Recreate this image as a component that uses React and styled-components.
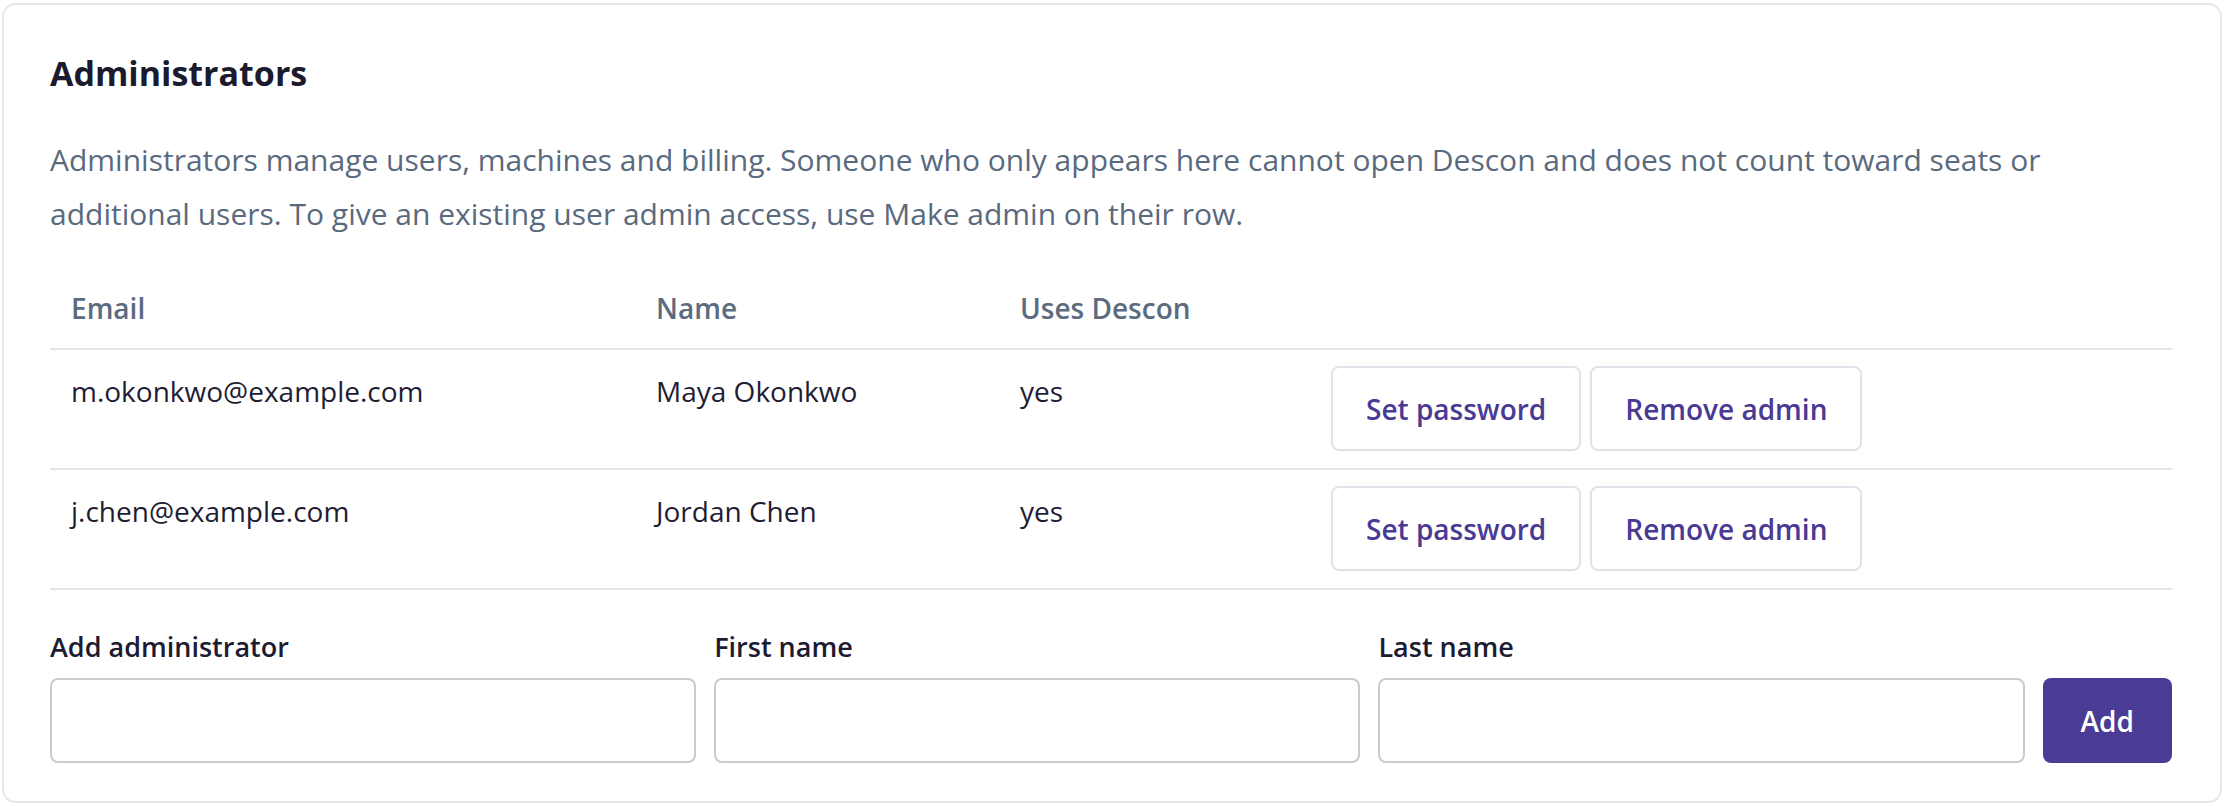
import React from "react";
import styled, { createGlobalStyle } from "styled-components";

const GlobalStyle = createGlobalStyle`
  html, body {
    margin: 0;
    padding: 0;
    background: #ffffff;
  }
  body {
    font-family: "Segoe UI", "Open Sans", "Noto Sans", sans-serif;
    color: #1d1b31;
  }
  * {
    box-sizing: border-box;
  }
`;

const Card = styled.section`
  margin: 3px 2px 2px 2px;
  padding: 47px 48px 38px 46px;
  background: #ffffff;
  border: 2px solid #e3e8ef;
  border-radius: 14px;
`;

const Title = styled.h2`
  margin: 0;
  font-size: 34px;
  line-height: 43px;
  font-weight: 700;
  color: #1b1a2e;
`;

const Intro = styled.p`
  margin: 38px 0 32px;
  font-size: 30px;
  line-height: 54px;
  color: #5a6a7e;
`;

const Table = styled.table`
  width: 100%;
  border-collapse: collapse;
  table-layout: fixed;
`;

const HeadCell = styled.th`
  width: ${({ $width }) => $width || "auto"};
  padding: 14px 21px 19px;
  text-align: left;
  font-size: 28px;
  line-height: 42px;
  font-weight: 600;
  color: #5b6b80;
  border-bottom: 2px solid #e2e6eb;
`;

const Row = styled.tr`
  border-bottom: 2px solid #e2e6eb;
`;

const Cell = styled.td`
  padding: 16px 21px 17px;
  vertical-align: top;
  font-size: 28px;
  line-height: 50px;
  color: #1f1d33;
`;

const Actions = styled.div`
  display: flex;
  gap: 9px;
`;

const GhostButton = styled.button`
  height: 85px;
  padding: 0 33px;
  background: #ffffff;
  border: 2px solid #dfe4ea;
  border-radius: 8px;
  font-family: inherit;
  font-size: 28px;
  font-weight: 600;
  color: #4a3a94;
  cursor: pointer;
`;

const AddForm = styled.form`
  display: grid;
  grid-template-columns: 1fr 1fr 1fr auto;
  column-gap: 18px;
  align-items: end;
  margin-top: 36px;
`;

const Field = styled.label`
  display: flex;
  flex-direction: column;
  gap: 10px;
`;

const FieldLabel = styled.span`
  font-size: 27px;
  line-height: 42px;
  font-weight: 600;
  color: #1d1b31;
`;

const Input = styled.input`
  height: 85px;
  width: 100%;
  padding: 0 20px;
  border: 2px solid #cbcbcb;
  border-radius: 8px;
  font-family: inherit;
  font-size: 28px;
  color: #1d1b31;
  background: #ffffff;
  outline: none;
`;

const PrimaryButton = styled.button`
  height: 85px;
  padding: 0 38px;
  background: #4a3b94;
  border: none;
  border-radius: 8px;
  font-family: inherit;
  font-size: 28px;
  font-weight: 600;
  color: #ffffff;
  cursor: pointer;
`;

const admins = [
  { email: "m.okonkwo@example.com", name: "Maya Okonkwo", uses: "yes" },
  { email: "j.chen@example.com", name: "Jordan Chen", uses: "yes" },
];

export default function App() {
  return (
    <>
      <GlobalStyle />
      <Card>
        <Title>Administrators</Title>
        <Intro>
          Administrators manage users, machines and billing. Someone who only appears here cannot
          open Descon and does not count toward seats or additional users. To give an existing user
          admin access, use Make admin on their row.
        </Intro>
        <Table>
          <thead>
            <tr>
              <HeadCell $width="585px">Email</HeadCell>
              <HeadCell $width="364px">Name</HeadCell>
              <HeadCell $width="311px">Uses Descon</HeadCell>
              <HeadCell />
            </tr>
          </thead>
          <tbody>
            {admins.map((a) => (
              <Row key={a.email}>
                <Cell>{a.email}</Cell>
                <Cell>{a.name}</Cell>
                <Cell>{a.uses}</Cell>
                <Cell>
                  <Actions>
                    <GhostButton type="button">Set password</GhostButton>
                    <GhostButton type="button">Remove admin</GhostButton>
                  </Actions>
                </Cell>
              </Row>
            ))}
          </tbody>
        </Table>
        <AddForm onSubmit={(e) => e.preventDefault()}>
          <Field>
            <FieldLabel>Add administrator</FieldLabel>
            <Input type="email" />
          </Field>
          <Field>
            <FieldLabel>First name</FieldLabel>
            <Input type="text" />
          </Field>
          <Field>
            <FieldLabel>Last name</FieldLabel>
            <Input type="text" />
          </Field>
          <PrimaryButton type="submit">Add</PrimaryButton>
        </AddForm>
      </Card>
    </>
  );
}
